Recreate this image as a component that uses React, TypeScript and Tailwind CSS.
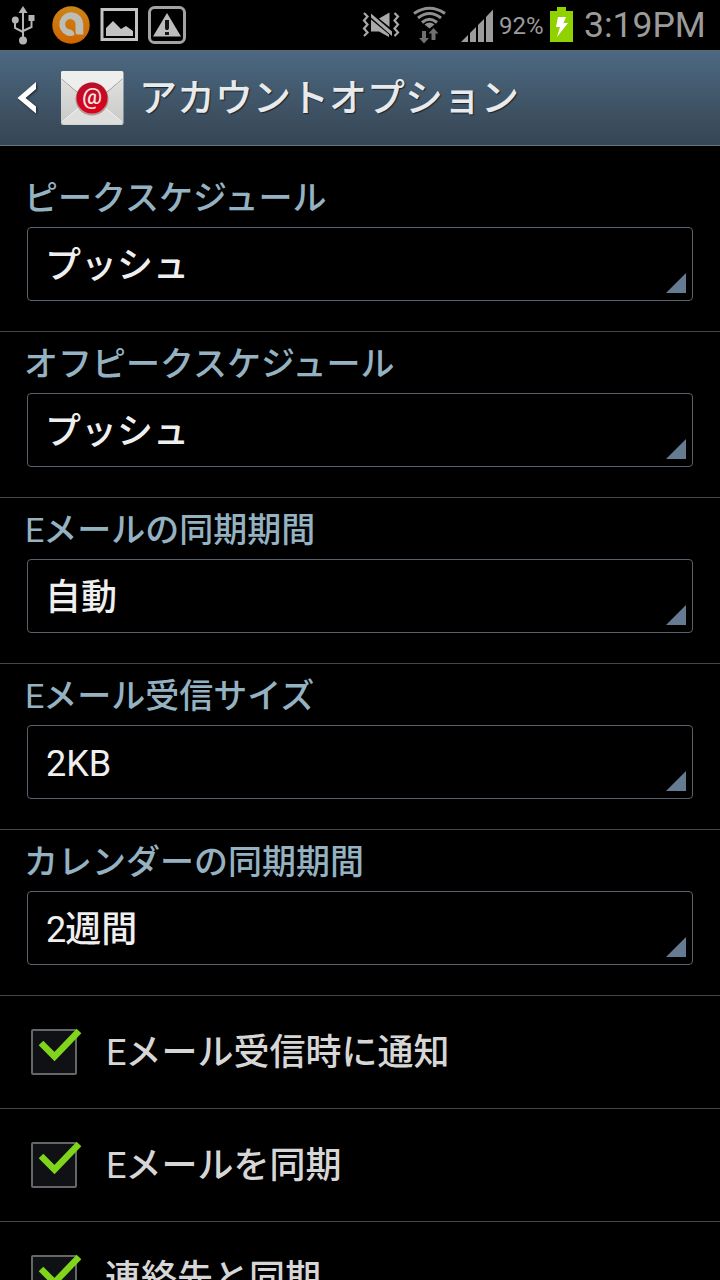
import { useState } from 'react';

const spinners = [
    { id: 1, label: 'ピークスケジュール', value: 'プッシュ' },
    { id: 2, label: 'オフピークスケジュール', value: 'プッシュ' },
    { id: 3, label: 'Eメールの同期期間', value: '自動' },
    { id: 4, label: 'Eメール受信サイズ', value: '2KB' },
    { id: 5, label: 'カレンダーの同期期間', value: '2週間' },
];

const options = [
    { id: 1, name: 'Eメール受信時に通知', checked: true },
    { id: 2, name: 'Eメールを同期', checked: true },
    { id: 3, name: '連絡先と同期', checked: true },
];

function LeftIcons() {
    return (
        <svg className="h-[50px] w-[200px]" viewBox="0 0 200 50" fill="none">
            {/* usb */}
            <g stroke="#b4b4b4" strokeWidth="2">
                <path d="M23 10V39M15 21V28L23 32M31.500 20V27L23 31" />
            </g>
            <g fill="#b4b4b4">
                <path d="M23 6L27.500 13H18.500Z" />
                <circle cx="15.300" cy="20" r="3.500" />
                <rect x="28.500" y="15" width="6" height="6" />
                <circle cx="23" cy="40.500" r="4" />
            </g>
            {/* avast */}
            <circle cx="71" cy="25" r="18.700" fill="url(#orange)" />
            <path
                d="M83.300 34.500H77.500Q75.500 34.500 75.500 31V25A5.200 5.200 0 1 0 70 29.500Q74 30 74.500 35Q71 36.500 67 35.500A12 12 0 1 1 83.300 24.500Z"
                fill="#bdbdb8"
            />
            {/* picture */}
            <rect x="102" y="9.500" width="34.500" height="30" stroke="#c3c3c3" strokeWidth="3" />
            <path d="M106 36V28L113 21L121 29L126 26L133 31V36Z" fill="#c3c3c3" />
            {/* warning */}
            <rect x="149.500" y="7.500" width="35" height="35" rx="5" stroke="#a3a3a3" strokeWidth="3" />
            <path d="M167 13L181 36.500H153Z" fill="#bdbdbd" />
            <path d="M165 20H169V28.500L168 30H166L165 28.500ZM165 32H169V35H165Z" fill="#161616" />
            <defs>
                <linearGradient id="orange" x1="0" y1="0" x2="0" y2="1">
                    <stop stopColor="#cb8517" />
                    <stop offset="1" stopColor="#d16400" />
                </linearGradient>
            </defs>
        </svg>
    );
}

function SignalIcons() {
    return (
        <svg className="h-[50px] w-[140px]" viewBox="360 0 140 50" fill="none">
            {/* vibrate */}
            <g stroke="#a9a9a9" strokeWidth="2.200">
                <path d="M364 13L367.500 16.500L364 20.500L367.500 24.500L364 28.500L367.500 32.500L364 36" />
                <path d="M394.500 13L398 16.500L394.500 20.500L398 24.500L394.500 28.500L398 32.500L394.500 36" />
            </g>
            <g fill="#a9a9a9">
                <path d="M371 19.500L389 34.500V37L379 31.500H371Z" />
                <path d="M371 13.500L392 31.500V36L371 17.500Z" />
                <path d="M379 18.500L389.500 12.500V27Z" />
            </g>
            {/* wifi */}
            <g stroke="#8f8f8f" strokeWidth="3">
                <path d="M414 13.500Q429.500 3 445 13.500" />
                <path d="M418 18Q429.500 9 441 18" />
                <path d="M422 22.500Q429.500 16 437 22.500" />
            </g>
            <path d="M424.500 24.500Q429.500 20.500 434.500 24.500L429.500 28.500Z" fill="#8f8f8f" />
            <path d="M422 31H426V38H429L424 43.500L419 38H422ZM431.500 40V33.500H428.500L433.500 28L438.500 33.500H435.500V40Z" fill="#707070" />
            {/* signal */}
            <g fill="#9c9c9c">
                <path d="M461 42L468 35V42Z" />
                <path d="M470 42V33L476 27V42Z" />
                <path d="M478 42V25L484 19V42Z" />
                <path d="M486 42V17L493 9.500V42Z" />
            </g>
        </svg>
    );
}

function StatusBar() {
    return (
        <div className="flex h-[50px] shrink-0 items-center bg-black font-['Roboto',sans-serif] text-[#9b9b9b]">
            <LeftIcons />
            <div className="ml-auto flex items-center">
                <SignalIcons />
                <span className="-ml-px w-[51px] pt-0.5 text-[24px] leading-none">92%</span>
                <svg className="h-[50px] w-6" viewBox="550 0 24 50">
                    <path d="M550 11H557V7H566V11H573V42H550Z" fill="#8fd200" />
                    <path d="M558 17H566L563.500 23H568L557 37L560 27H556Z" fill="#fff" />
                </svg>
                <span className="w-[146px] pl-[10px] text-[35.500px] leading-[50px]">3:19PM</span>
            </div>
        </div>
    );
}

function MailIcon() {
    return (
        <svg className="h-[56px] w-[64px]" viewBox="0 0 64 56">
            <defs>
                <linearGradient id="paper" x1="0" y1="0" x2="0" y2="1">
                    <stop stopColor="#e4e4e2" />
                    <stop offset="1" stopColor="#c8c8c6" />
                </linearGradient>
                <linearGradient id="red" x1="0" y1="0" x2="0" y2="1">
                    <stop stopColor="#b8102a" />
                    <stop offset="1" stopColor="#e00018" />
                </linearGradient>
            </defs>
            <rect x="1" y="1" width="62.500" height="54" rx="2" fill="url(#paper)" />
            <path d="M2 53L25 33H39L62 53Q62 54.500 60 54.500H4Z" fill="#dededc" />
            <path d="M2 52L26 32M62 52L38 32" stroke="#f8f8f8" />
            <path d="M2 9L32 35L62 9" stroke="#929292" fill="none" />
            <path d="M1 8L32 34L63 8V3Q63 1 61 1H3Q1 1 1 3Z" fill="#eeeeec" />
            <circle cx="32" cy="29" r="16.500" fill="#7d5555" opacity=".5" />
            <circle cx="32" cy="28" r="15.500" fill="url(#red)" />
            <text x="32" y="34" textAnchor="middle" fill="#f5e8e4" className="font-['Roboto',sans-serif] text-[22px] font-medium">@</text>
        </svg>
    );
}

function Header() {
    return (
        <header className="flex h-24 shrink-0 items-center border-t border-b border-t-[#5c6870] border-b-[#617482] bg-linear-to-b from-[#4c6982] to-[#364553]">
            <svg className="ml-4 h-9 w-[22px] drop-shadow-[1px_1px_1px_#222]" viewBox="0 0 22 36">
                <path d="M20 2V9L9.500 18L20 26.500V33.500L1.500 18Z" fill="#fff" />
            </svg>
            <div className="ml-[22px]">
                <MailIcon />
            </div>
            <h1 className="ml-[15px] text-[38px] leading-none font-medium text-[#e8eaec] [text-shadow:1px_1px_1px_#1c242b]">アカウントオプション</h1>
        </header>
    );
}

// latin letters stay at the regular Roboto weight, kana and kanji are heavier
function Mixed({ text }: { text: string }) {
    const latin = text.match(/^[A-Z0-9]+/)?.[0] ?? '';
    return (
        <>
            {latin && <span className="-mr-px pl-px font-normal">{latin}</span>}
            {text.slice(latin.length)}
        </>
    );
}

function Spinner({ label, value }: { label: string; value: string }) {
    return (
        <div className="h-[166px] shrink-0 border-b border-[#444648] px-[27px]">
            <div className="-ml-[3px] h-[61px] pt-0.5 text-[34px] leading-[61px] font-medium text-[#94b2c1]">
                <Mixed text={label} />
            </div>
            <button className="relative flex h-[74px] w-full items-center rounded-[4px] border border-[#56616c] pt-[3px] pl-[17px] text-[36px] leading-none font-medium text-[#efefef]">
                <span>
                    <Mixed text={value} />
                </span>
                <svg className="absolute right-1.5 bottom-[7px] h-5 w-5" viewBox="0 0 20 20">
                    <path d="M20 0V20H0Z" fill="#657b92" />
                </svg>
            </button>
        </div>
    );
}

export default function App() {
    const [items, setItems] = useState(options);

    function toggle(id: number) {
        setItems(items.map((item) => (item.id === id ? { ...item, checked: !item.checked } : item)));
    }

    return (
        <div lang="ja" className="flex h-[1280px] w-[720px] flex-col overflow-hidden bg-black font-['Roboto','Noto_Sans_CJK_JP',sans-serif]">
            <StatusBar />
            <Header />
            <main className="flex flex-col pt-5">
                {spinners.map((item) => (
                    <Spinner key={item.id} label={item.label} value={item.value} />
                ))}
                {items.map((item) => (
                    <button
                        key={item.id}
                        className="flex h-[113px] shrink-0 items-center border-b border-[#444648] pl-[31px] text-[36px] font-medium text-[#d6d6d6]"
                        onClick={() => toggle(item.id)}
                    >
                        <svg className="h-[50px] w-[54px]" viewBox="0 0 54 50" fill="none">
                            <rect x="1" y="3" width="44" height="44" rx="1" fill="#0f1114" stroke="#646669" strokeWidth="2" />
                            {item.checked && <path d="M10 16L23.500 29.500L48 4" stroke="#80d41c" strokeWidth="6.500" />}
                        </svg>
                        <span className="ml-5 pt-0.5 leading-none">
                            <Mixed text={item.name} />
                        </span>
                    </button>
                ))}
            </main>
        </div>
    );
}
